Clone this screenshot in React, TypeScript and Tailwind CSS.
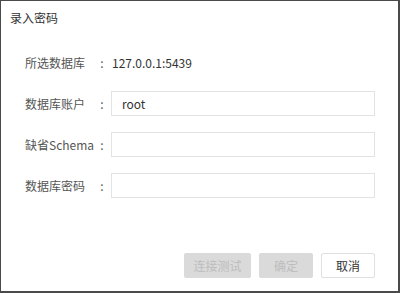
import React from "react";

const font = { fontFamily: '"Noto Sans CJK SC", "Noto Sans", sans-serif' };

function Row({ label, children }: { label: string; children: React.ReactNode }) {
  return (
    <div className="flex items-center h-[25px]">
      <div className="w-[70px] text-[12px] text-[#555] whitespace-nowrap">{label}</div>
      <div className="w-[14px] text-center text-[12px] text-[#555]">:</div>
      {children}
    </div>
  );
}

function Input({ value }: { value?: string }) {
  return (
    <div className="ml-[2px] w-[264px] h-[25px] border border-[#e3e3e3] bg-white flex items-center pl-[10px] text-[12px] text-[#333]">
      {value}
    </div>
  );
}

export default function App() {
  return (
    <div
      className="w-[400px] h-[293px] bg-white border-t border-l border-r-2 border-b-2 border-[#4a4a4a] flex flex-col"
      style={font}
    >
      <div className="pt-[7px] pl-[9px] h-[27px] leading-[20px] text-[12px] text-[#333]">录入密码</div>
      <div className="mt-[22px] pl-[24px] flex flex-col gap-[16px]">
        <Row label="所选数据库">
          <div className="ml-[3px] text-[12px] text-[#333]">127.0.0.1:5439</div>
        </Row>
        <Row label="数据库账户">
          <Input value="root" />
        </Row>
        <Row label="缺省Schema">
          <Input />
        </Row>
        <Row label="数据库密码">
          <Input />
        </Row>
      </div>
      <div className="mt-auto mb-[13px] pr-[23px] flex justify-end gap-[8px]">
        <button className="w-[67px] h-[25px] bg-[#dadada] text-[#bdbdbd] text-[12px] rounded-[2px]">连接测试</button>
        <button className="w-[54px] h-[25px] bg-[#dadada] text-[#bdbdbd] text-[12px] rounded-[2px]">确定</button>
        <button className="w-[54px] h-[25px] bg-white border border-[#e0e0e0] text-[#333] text-[12px] rounded-[2px]">取消</button>
      </div>
    </div>
  );
}
